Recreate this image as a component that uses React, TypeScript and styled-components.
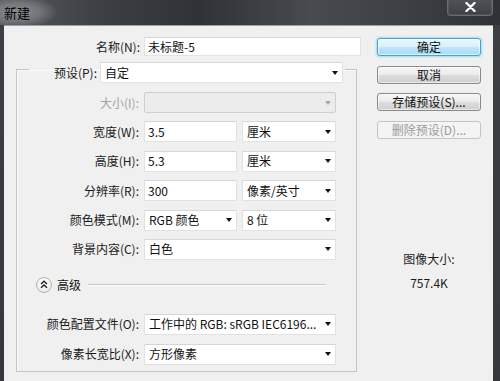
import React from "react";
import styled, { createGlobalStyle, css } from "styled-components";

const GlobalStyle = createGlobalStyle`
  html, body {
    margin: 0;
    padding: 0;
    background: #3a3d42;
  }
  body {
    font-family: "Noto Sans CJK SC", "Noto Sans", sans-serif;
    font-size: 12px;
    color: #111;
  }
  * { box-sizing: border-box; }
`;

const Window = styled.div`
  width: 500px;
  height: 381px;
  display: flex;
  flex-direction: column;
  overflow: hidden;
  background: linear-gradient(180deg, #3c3f44 0%, #34373c 100%);
`;

const TitleBar = styled.div`
  height: 25px;
  flex: 0 0 25px;
  display: flex;
  justify-content: space-between;
  align-items: flex-start;
  padding: 0 7px 0 4px;
  background:
    radial-gradient(ellipse 40px 16px at 18px 12px, rgba(140, 142, 145, 0.95) 0%, rgba(140, 142, 145, 0.6) 55%, rgba(140, 142, 145, 0) 100%),
    linear-gradient(90deg, #55585c 0%, #3a3d42 22%, #2f3237 40%, #474a4f 62%, #3d4045 80%, #2e3135 100%);
`;

const Title = styled.span`
  margin-top: 4px;
  font-size: 13px;
  line-height: 17px;
  color: #000000;
`;

const CloseButton = styled.div`
  width: 46px;
  height: 17px;
  margin-top: -1px;
  display: flex;
  align-items: center;
  justify-content: center;
  border: 1px solid #6a6e74;
  border-top: none;
  border-radius: 0 0 4px 4px;
  background: linear-gradient(180deg, #50535a 0%, #3e4146 100%);
  box-shadow: inset 0 0 0 1px rgba(255, 255, 255, 0.08);
`;

const Client = styled.div`
  flex: 1;
  margin: 0 7px 0 4px;
  background: #f0f0f0;
  display: flex;
  padding: 11px 12px 0 12px;
  border-top: 1px solid #9da1a6;
`;

const LeftPanel = styled.div`
  width: 345px;
  display: flex;
  flex-direction: column;
`;

const RightPanel = styled.div`
  width: 104px;
  margin-left: 16px;
  padding-top: 1px;
  display: flex;
  flex-direction: column;
`;

const FormRow = styled.div<{ $h?: number }>`
  display: flex;
  align-items: center;
  height: ${(p) => p.$h ?? 21}px;
`;

const Label = styled.span<{ $w: number; $gap: number; $disabled?: boolean }>`
  width: ${(p) => p.$w}px;
  margin-right: ${(p) => p.$gap}px;
  text-align: right;
  white-space: nowrap;
  line-height: 16px;
  color: ${(p) => (p.$disabled ? "#a3a3a3" : "#1a1a1a")};
`;

const fieldBase = css`
  height: 100%;
  display: flex;
  align-items: center;
  padding-left: 3px;
  line-height: 16px;
  white-space: nowrap;
  overflow: hidden;
  background: #ffffff;
  border: 1px solid #e2e2e2;
  border-top-color: #d6d6d6;
`;

const TextField = styled.div<{ $w: number }>`
  ${fieldBase};
  width: ${(p) => p.$w}px;
`;

const SelectField = styled.div<{ $w: number; $disabled?: boolean }>`
  ${fieldBase};
  width: ${(p) => p.$w}px;
  justify-content: space-between;
  padding-right: 4px;
  ${(p) =>
    p.$disabled &&
    css`
      background: #ececec;
      border-color: #cfcfcf;
      border-radius: 2px;
    `}
`;

const SelectText = styled.span`
  overflow: hidden;
  padding-left: 1px;
`;

const Arrow = styled.span<{ $disabled?: boolean }>`
  flex: 0 0 auto;
  width: 0;
  height: 0;
  border-left: 3.5px solid transparent;
  border-right: 3.5px solid transparent;
  border-top: 4px solid ${(p) => (p.$disabled ? "#a8a8a8" : "#111")};
`;

const GroupBox = styled.fieldset`
  margin: -1px 0 0 0;
  padding: 9px 0 6px 0;
  width: 341px;
  min-inline-size: 0;
  border: 1px solid #c4c4c4;
  box-shadow: inset 1px 1px 0 #fbfbfb;
  display: flex;
  flex-direction: column;
`;

const GroupLegend = styled.legend`
  margin-left: 12px;
  padding: 7px 2px 0 0;
  display: flex;
  align-items: center;
  height: 28px;
`;

const RowStack = styled.div<{ $gap: number }>`
  display: flex;
  flex-direction: column;
  gap: ${(p) => p.$gap}px;
`;

const Pair = styled.div`
  display: flex;
  gap: 5px;
  height: 100%;
`;

const AdvancedRow = styled.div`
  height: 16px;
  margin: 17px 0 21px 0;
  padding-left: 19px;
  display: flex;
  align-items: center;
`;

const ToggleCircle = styled.span`
  width: 16px;
  height: 16px;
  border-radius: 50%;
  border: 1px solid #b5b5b5;
  background: radial-gradient(circle at 50% 35%, #ffffff 0%, #f3f3f3 55%, #d8d8d8 100%);
  display: flex;
  align-items: center;
  justify-content: center;
`;

const AdvancedText = styled.span`
  margin-left: 5px;
  line-height: 16px;
`;

const Rule = styled.span`
  flex: 1;
  margin: 0 30px 0 7px;
  height: 2px;
  border-top: 1px solid #c8c8c8;
  border-bottom: 1px solid #fcfcfc;
`;

const Button = styled.div<{ $variant?: "default" | "primary" | "disabled" }>`
  height: 18px;
  display: flex;
  align-items: center;
  justify-content: center;
  border-radius: 3px;
  line-height: 16px;
  white-space: nowrap;
  & + & {
    margin-top: 9.5px;
  }
  ${(p) =>
    p.$variant === "primary"
      ? css`
          border: 1px solid #4ba3c9;
          background: linear-gradient(180deg, #eaf6fd 0%, #d9f0fc 48%, #bee6fd 52%, #a7d9f5 100%);
          box-shadow: 0 0 2px 1px rgba(95, 200, 235, 0.55), inset 0 0 0 1px rgba(255, 255, 255, 0.6);
          color: #111;
        `
      : p.$variant === "disabled"
      ? css`
          border: 1px solid #c2c4c6;
          background: #f4f4f4;
          color: #9a9a9a;
        `
      : css`
          border: 1px solid #8a8a8a;
          background: linear-gradient(180deg, #f6f6f6 0%, #ebebeb 48%, #dddddd 52%, #cfcfcf 100%);
          box-shadow: inset 0 0 0 1px rgba(255, 255, 255, 0.55);
          color: #111;
        `}
`;

const SizeInfo = styled.div`
  margin-top: 112px;
  display: flex;
  flex-direction: column;
  align-items: center;
  gap: 8px;
  line-height: 16px;
  color: #1c1c1c;
`;

const CloseIcon = () => (
  <svg width="11" height="10" viewBox="0 0 11 10">
    <path d="M1.5 1 L9.5 9 M9.5 1 L1.5 9" stroke="#ffffff" strokeWidth="2.4" strokeLinecap="round" />
  </svg>
);

const CollapseIcon = () => (
  <svg width="8" height="9" viewBox="0 0 8 9">
    <path d="M1 4 L4 1.2 L7 4 M1 7.8 L4 5 L7 7.8" stroke="#222" strokeWidth="1.4" fill="none" />
  </svg>
);

type Row = { label: string; content: React.ReactNode; disabled?: boolean };

const Select = ({ w, text, disabled }: { w: number; text: string; disabled?: boolean }) => (
  <SelectField $w={w} $disabled={disabled}>
    <SelectText>{text}</SelectText>
    <Arrow $disabled={disabled} />
  </SelectField>
);

export default function App() {
  const mainRows: Row[] = [
    { label: "大小(I):", content: <Select w={192} text="" disabled />, disabled: true },
    {
      label: "宽度(W):",
      content: (
        <Pair>
          <TextField $w={93}>3.5</TextField>
          <Select w={94} text="厘米" />
        </Pair>
      ),
    },
    {
      label: "高度(H):",
      content: (
        <Pair>
          <TextField $w={93}>5.3</TextField>
          <Select w={94} text="厘米" />
        </Pair>
      ),
    },
    {
      label: "分辨率(R):",
      content: (
        <Pair>
          <TextField $w={93}>300</TextField>
          <Select w={94} text="像素/英寸" />
        </Pair>
      ),
    },
    {
      label: "颜色模式(M):",
      content: (
        <Pair>
          <Select w={93} text="RGB 颜色" />
          <Select w={94} text="8 位" />
        </Pair>
      ),
    },
    { label: "背景内容(C):", content: <Select w={192} text="白色" /> },
  ];

  const advancedRows: Row[] = [
    { label: "颜色配置文件(O):", content: <Select w={192} text="工作中的 RGB: sRGB IEC6196..." /> },
    { label: "像素长宽比(X):", content: <Select w={192} text="方形像素" /> },
  ];

  return (
    <>
      <GlobalStyle />
      <Window>
        <TitleBar>
          <Title>新建</Title>
          <CloseButton>
            <CloseIcon />
          </CloseButton>
        </TitleBar>
        <Client>
          <LeftPanel>
            <FormRow $h={19}>
              <Label $w={124} $gap={4}>
                名称(N):
              </Label>
              <TextField $w={217}>未标题-5</TextField>
            </FormRow>
            <GroupBox>
              <GroupLegend>
                <Label $w={68} $gap={3}>
                  预设(P):
                </Label>
                <FormRow>
                  <Select w={243} text="自定" />
                </FormRow>
              </GroupLegend>
              <RowStack $gap={8.4}>
                {mainRows.map((r) => (
                  <FormRow key={r.label}>
                    <Label $w={122} $gap={5} $disabled={r.disabled}>
                      {r.label}
                    </Label>
                    {r.content}
                  </FormRow>
                ))}
              </RowStack>
              <AdvancedRow>
                <ToggleCircle>
                  <CollapseIcon />
                </ToggleCircle>
                <AdvancedText>高级</AdvancedText>
                <Rule />
              </AdvancedRow>
              <RowStack $gap={9}>
                {advancedRows.map((r) => (
                  <FormRow key={r.label}>
                    <Label $w={122} $gap={5}>
                      {r.label}
                    </Label>
                    {r.content}
                  </FormRow>
                ))}
              </RowStack>
            </GroupBox>
          </LeftPanel>
          <RightPanel>
            <Button $variant="primary">确定</Button>
            <Button>取消</Button>
            <Button>存储预设(S)...</Button>
            <Button $variant="disabled">删除预设(D)...</Button>
            <SizeInfo>
              <span>图像大小:</span>
              <span>757.4K</span>
            </SizeInfo>
          </RightPanel>
        </Client>
      </Window>
    </>
  );
}
